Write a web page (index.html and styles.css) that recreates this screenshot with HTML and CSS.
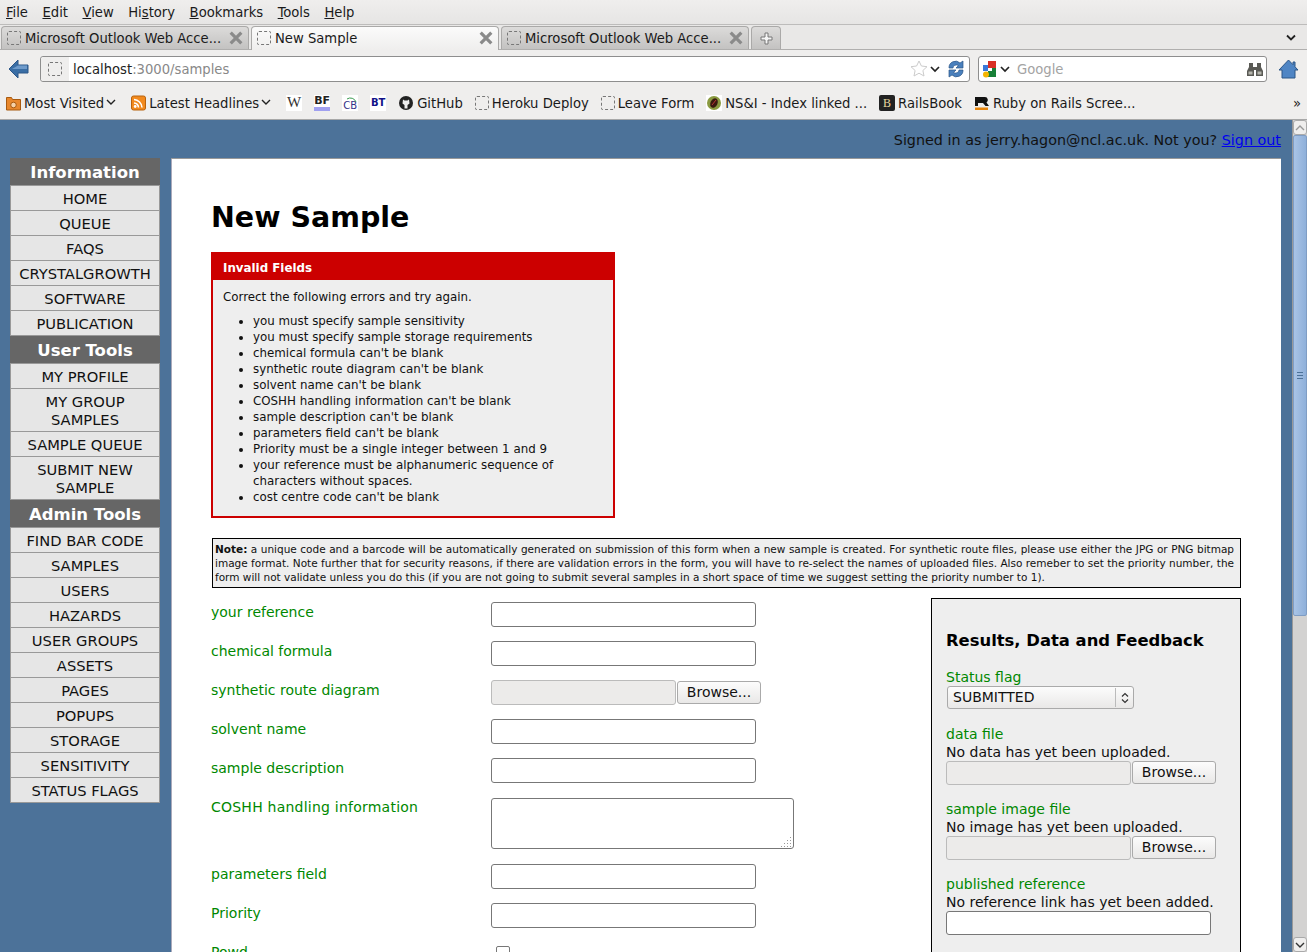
FILE: index.html
```html
<!DOCTYPE html>
<html lang="en">
<head>
    <meta charset="UTF-8">
    <meta name="viewport" content="width=device-width, initial-scale=1.0">
    <title>New Sample</title>
    <link rel="stylesheet" href="styles.css">
</head>
<body>
    <div class="chrome">
        <div class="menubar">
            <span><u>F</u>ile</span><span><u>E</u>dit</span><span><u>V</u>iew</span><span>Hi<u>s</u>tory</span><span><u>B</u>ookmarks</span><span><u>T</u>ools</span><span><u>H</u>elp</span>
        </div>
        <div class="tabbar">
            <div class="tab"><i class="fav"></i><span class="tab-title">Microsoft Outlook Web Acce...</span><svg class="tab-x" viewBox="0 0 12 12"><path d="M2 2l8 8M10 2l-8 8"/></svg></div>
            <div class="tab tab-on"><i class="fav"></i><span class="tab-title">New Sample</span><svg class="tab-x" viewBox="0 0 12 12"><path d="M2 2l8 8M10 2l-8 8"/></svg></div>
            <div class="tab"><i class="fav"></i><span class="tab-title">Microsoft Outlook Web Acce...</span><svg class="tab-x" viewBox="0 0 12 12"><path d="M2 2l8 8M10 2l-8 8"/></svg></div>
            <div class="tab tab-new"><svg width="13" height="13" viewBox="0 0 13 13"><path d="M5 1h3v4h4v3H8v4H5V8H1V5h4z" fill="#f4f4f4" stroke="#777"/></svg></div>
            <svg class="tab-list" width="12" height="8" viewBox="0 0 12 8"><path d="M2 1.500l4 4 4-4" fill="none" stroke="#222" stroke-width="1.800"/></svg>
        </div>
        <div class="navbar">
            <svg class="back" width="22" height="20" viewBox="0 0 22 20"><path d="M1 10l9-9v5h10v8H10v5z" fill="#3a6ea5" stroke="#2c5688"/><path d="M10 6.500h9V10H4z" fill="#6f9bcb"/></svg>
            <div class="urlbar">
                <span class="url-fav"><i class="fav"></i></span>
                <span class="url-text">localhost<em>:3000/samples</em></span>
                <svg width="18" height="18" viewBox="0 0 18 18"><path d="M9 1l2.400 5 5.600.7-4.100 3.800 1.100 5.500-5-2.800-5 2.800 1.100-5.500L1 6.700 6.600 6z" fill="#fff" stroke="#ccc"/></svg>
                <svg class="drop" width="10" height="7" viewBox="0 0 10 7"><path d="M1 1l4 4 4-4" fill="none" stroke="#222" stroke-width="1.700"/></svg>
                <svg class="reload" width="16" height="18" viewBox="0 0 16 18"><path d="M1 8a6.500 6.500 0 0 1 11-5l3-2v7H8l2.500-2.500a3.500 3 0 0 0-5.500 2.500zM15 10a6.500 6.500 0 0 1-11 5l-3 2v-7h7l-2.500 2.500a3.500 3 0 0 0 5.500-2.500z" fill="#4a80bd" stroke="#2c5688" stroke-width=".7"/></svg>
            </div>
            <div class="searchbar">
                <svg width="16" height="17" viewBox="0 0 16 17"><rect x="1" y="4" width="5" height="6" fill="#3b78d8"/><rect x="6" y="0" width="8" height="7" fill="#d93025"/><rect x="6" y="7" width="8" height="9" fill="#188038"/><path d="M6 7h4v3H6z" fill="#fff"/><circle cx="4" cy="13.500" r="3" fill="#f4b400"/></svg>
                <svg class="drop" width="10" height="7" viewBox="0 0 10 7"><path d="M1 1l4 4 4-4" fill="none" stroke="#222" stroke-width="1.700"/></svg>
                <span class="search-text">Google</span>
                <svg width="16" height="15" viewBox="0 0 16 15"><path d="M2 1h4v4h4V1h4v4l2 4v5H9V8H7v6H0V9l2-4z" fill="#5a5a55"/><path d="M1.500 9.500h4v3h-4zM10.500 9.500h4v3h-4z" fill="#b5b5ad"/></svg>
            </div>
            <svg class="home" width="21" height="20" viewBox="0 0 21 20"><path d="M10.500 1L1 11h3v8h13v-8h3l-3-3.200V3h-2v2.700z" fill="#4f85c4" stroke="#2c5688"/></svg>
        </div>
        <div class="bookmarks">
            <span class="bm"><svg width="15" height="16" viewBox="0 0 15 16"><path d="M.5 15V2.500h5l1 2h8V15z" fill="#e8872c" stroke="#a85a10"/><circle cx="7.500" cy="10" r="2.800" fill="#f6d2a8" stroke="#a85a10"/></svg>Most Visited<svg class="drop" width="10" height="7" viewBox="0 0 10 7"><path d="M1 1l4 4 4-4" fill="none" stroke="#222" stroke-width="1.400"/></svg></span>
            <span class="bm"><svg width="15" height="16" viewBox="0 0 15 16"><rect x=".5" y="1" width="14" height="14" rx="2" fill="#f28a1e" stroke="#b8620d"/><path d="M3 4.500a8.500 8.500 0 0 1 8 8M3 8a5 5 0 0 1 4.500 4.500" fill="none" stroke="#fff" stroke-width="1.600"/><circle cx="4.200" cy="11.500" r="1.400" fill="#fff"/></svg>Latest Headlines<svg class="drop" width="10" height="7" viewBox="0 0 10 7"><path d="M1 1l4 4 4-4" fill="none" stroke="#222" stroke-width="1.400"/></svg></span>
            <span class="bm bm-box bm-w">W</span>
            <span class="bm bm-box bm-bf">BF</span>
            <span class="bm bm-box bm-cb">CB<svg width="16" height="16" viewBox="0 0 16 16"><path d="M5 4a6 6 0 0 1 9 3" fill="none" stroke="#3a9a50" stroke-width="1"/></svg></span>
            <span class="bm bm-box bm-bt">BT</span>
            <span class="bm"><svg width="16" height="16" viewBox="0 0 16 16"><circle cx="8" cy="8" r="7" fill="#222"/><path d="M5 4.500l1.500 1h3l1.500-1 .5 4-2 1.500v3.500H6.500V10l-2-1.500z" fill="#eee"/></svg>GitHub</span>
            <span class="bm"><i class="fav"></i>Heroku Deploy</span>
            <span class="bm"><i class="fav"></i>Leave Form</span>
            <span class="bm"><svg width="16" height="16" viewBox="0 0 16 16"><rect width="16" height="16" fill="#fff"/><circle cx="8" cy="8" r="7" fill="#8a9a40"/><ellipse cx="8" cy="8" rx="3.500" ry="5" transform="rotate(25 8 8)" fill="#3a1a10"/><path d="M6 10l4-5" stroke="#b33" stroke-width="1"/></svg>NS&amp;I - Index linked ...</span>
            <span class="bm"><span class="bm-rb">B</span>RailsBook</span>
            <span class="bm"><svg width="16" height="16" viewBox="0 0 16 16"><path d="M1 2h10a3 3 0 0 1 1.500 5.500L15 11h-3.500L9 8H4v3H1z" fill="#111"/><rect x="1" y="12.500" width="13" height="2.500" fill="#e8860c"/></svg>Ruby on Rails Scree...</span>
            <span class="bm-more">»</span>
        </div>
    </div>

    <div class="viewport">
        <div class="page">
            <p class="signed">Signed in as jerry.hagon@ncl.ac.uk. Not you? <a href="#">Sign out</a></p>
            <div class="columns">
                <nav class="side">
                    <h2>Information</h2>
                    <a>HOME</a><a>QUEUE</a><a>FAQS</a><a>CRYSTALGROWTH</a><a>SOFTWARE</a><a>PUBLICATION</a>
                    <h2>User Tools</h2>
                    <a>MY PROFILE</a><a>MY GROUP SAMPLES</a><a>SAMPLE QUEUE</a><a>SUBMIT NEW SAMPLE</a>
                    <h2>Admin Tools</h2>
                    <a>FIND BAR CODE</a><a>SAMPLES</a><a>USERS</a><a>HAZARDS</a><a>USER GROUPS</a><a>ASSETS</a><a>PAGES</a><a>POPUPS</a><a>STORAGE</a><a>SENSITIVITY</a><a>STATUS FLAGS</a>
                </nav>
                <main class="content">
                    <h1>New Sample</h1>
                    <div class="errors">
                        <h3>Invalid Fields</h3>
                        <p>Correct the following errors and try again.</p>
                        <ul>
                            <li>you must specify sample sensitivity</li>
                            <li>you must specify sample storage requirements</li>
                            <li>chemical formula can't be blank</li>
                            <li>synthetic route diagram can't be blank</li>
                            <li>solvent name can't be blank</li>
                            <li>COSHH handling information can't be blank</li>
                            <li>sample description can't be blank</li>
                            <li>parameters field can't be blank</li>
                            <li>Priority must be a single integer between 1 and 9</li>
                            <li>your reference must be alphanumeric sequence of characters without spaces.</li>
                            <li>cost centre code can't be blank</li>
                        </ul>
                    </div>
                    <div class="note"><b>Note:</b> a unique code and a barcode will be automatically generated on submission of this form when a new sample is created. For synthetic route files, please use either the JPG or PNG bitmap image format. Note further that for security reasons, if there are validation errors in the form, you will have to re-select the names of uploaded files. Also remeber to set the priority number, the form will not validate unless you do this (if you are not going to submit several samples in a short space of time we suggest setting the priority number to 1).</div>
                    <div class="form-wrap">
                        <div class="fields">
                            <div class="row"><label>your reference</label><span class="box"></span></div>
                            <div class="row"><label>chemical formula</label><span class="box"></span></div>
                            <div class="row"><label>synthetic route diagram</label><span class="box box-file"></span><span class="browse">Browse...</span></div>
                            <div class="row"><label>solvent name</label><span class="box"></span></div>
                            <div class="row"><label>sample description</label><span class="box"></span></div>
                            <div class="row row-area"><label class="label-caps">COSHH handling information</label><span class="box box-area"><svg class="grip" width="11" height="11" viewBox="0 0 11 11"><path d="M9 1h1v1H9zM6 4h1v1H6zM9 4h1v1H9zM3 7h1v1H3zM6 7h1v1H6zM9 7h1v1H9zM0 10h1v1H0zM3 10h1v1H3zM6 10h1v1H6zM9 10h1v1H9z" fill="#999"/></svg></span></div>
                            <div class="row"><label>parameters field</label><span class="box"></span></div>
                            <div class="row"><label>Priority</label><span class="box"></span></div>
                            <div class="row"><label>Powd</label><span class="check"></span></div>
                        </div>
                        <aside class="panel">
                            <h3>Results, Data and Feedback</h3>
                            <div class="group group-select">
                                <label>Status flag</label>
                                <div class="select"><span>SUBMITTED</span><svg width="8" height="12" viewBox="0 0 8 12"><path d="M1 4.500l3-3 3 3M1 7.500l3 3 3-3" fill="none" stroke="#333" stroke-width="1.200"/></svg></div>
                            </div>
                            <div class="group">
                                <label>data file</label>
                                <p>No data has yet been uploaded.</p>
                                <div class="file-line"><span class="box box-file"></span><span class="browse">Browse...</span></div>
                            </div>
                            <div class="group">
                                <label>sample image file</label>
                                <p>No image has yet been uploaded.</p>
                                <div class="file-line"><span class="box box-file"></span><span class="browse">Browse...</span></div>
                            </div>
                            <div class="group">
                                <label>published reference</label>
                                <p>No reference link has yet been added.</p>
                                <span class="box"></span>
                            </div>
                        </aside>
                    </div>
                </main>
            </div>
        </div>
        <div class="scrollbar">
            <span class="sb-btn"><svg width="10" height="6" viewBox="0 0 10 6"><path d="M1 5l4-4 4 4" fill="none" stroke="#999" stroke-width="1.400"/></svg></span>
            <span class="sb-thumb"><i></i><i></i><i></i></span>
            <span class="sb-track"></span>
            <span class="sb-btn"><svg width="10" height="6" viewBox="0 0 10 6"><path d="M1 1l4 4 4-4" fill="none" stroke="#333" stroke-width="1.400"/></svg></span>
        </div>
    </div>
</body>
</html>
```

FILE: styles.css
```css
html, body { margin: 0; height: 100%; overflow: hidden; }
body { font-family: "DejaVu Sans", sans-serif; font-size: 14px; display: flex; flex-direction: column; height: 952px; }

/* browser chrome */
.chrome { height: 120px; flex: none; font-stretch: condensed; font-size: 14.65px; color: #1a1a1a; background: #edeceb; border-bottom: 1px solid #a8a8a8; box-sizing: border-box; }
.menubar { height: 25px; display: flex; gap: 14.5px; align-items: center; padding: 0 0 2px 6px; background: linear-gradient(#efeeed, #e6e5e4); border-bottom: 1px solid #bdbcbb; box-sizing: border-box; }
.tabbar { height: 25px; display: flex; align-items: flex-end; padding-left: 1px; border-bottom: 1px solid #b0afae; box-sizing: border-box; background: #e9e8e7; position: relative; }
.tab { width: 248px; height: 23px; margin-right: 2px; display: flex; align-items: center; padding: 0 4px 0 5px; box-sizing: border-box; background: linear-gradient(#dcdbda, #c3c2c1); border: 1px solid #aaa9a8; border-bottom: none; border-radius: 4px 4px 0 0; }
.tab-on { background: linear-gradient(#fbfbfb, #efeeed); height: 24px; margin-bottom: -1px; padding-bottom: 1px; }
.tab-new { width: 30px; justify-content: center; padding: 0; }
.tab-title { flex: 1; margin-left: 4px; padding-bottom: 2px; white-space: nowrap; }
.tab-x { width: 16px; height: 16px; fill: none; stroke: #8a8a8a; stroke-width: 2.400; }
.tab-list { position: absolute; right: 10px; top: 9px; }
.fav { display: inline-block; width: 12px; height: 12px; border: 1px dashed #777; border-radius: 2px; flex: none; }
.navbar { height: 38px; display: flex; align-items: center; padding-left: 8px; box-sizing: border-box; background: #efeeed; }
.back { margin-right: 10px; }
.urlbar, .searchbar { height: 26px; background: #fff; border: 1px solid #8e8e8e; border-radius: 3px; box-sizing: border-box; display: flex; align-items: center; flex: none; }
.urlbar { width: 930px; padding-right: 5px; }
.url-fav { width: 28px; height: 24px; margin-right: 4px; background: #efeeed; display: flex; align-items: center; justify-content: center; flex: none; border-radius: 3px 0 0 3px; }
.url-text { flex: 1; padding-bottom: 2px; color: #222; }
.url-text em { font-style: normal; color: #888; }
.drop { margin: 0 2px; flex: none; }
.reload { margin-left: 6px; }
.searchbar { width: 289px; margin-left: 8px; padding: 0 3px 0 3px; }
.search-text { flex: 1; margin-left: 5px; padding-bottom: 2px; color: #a3a3a3; }
.home { margin-left: 11px; }
.bookmarks { height: 31px; display: flex; align-items: center; padding: 0 0 2px 6px; gap: 12px; position: relative; box-sizing: border-box; background: #efeeed; }
.bm { display: inline-flex; align-items: center; gap: 3px; white-space: nowrap; }
.bm .drop { margin: 0 3px 0 -1px; }
.bm-box { width: 16px; height: 16px; justify-content: center; background: #fff; font-weight: bold; font-size: 11px; font-stretch: normal; overflow: hidden; position: relative; }
.bm-w { font-family: "Liberation Serif", serif; font-size: 15px; font-weight: normal; color: #333; }
.bm-bf { color: #222; border-bottom: 4px solid #a0a0f0; box-sizing: border-box; line-height: 12px; }
.bm-cb { color: #338; font-weight: normal; font-size: 10px; align-items: flex-end; }
.bm-cb svg { position: absolute; left: 0; top: 0; }
.bm-bt { color: #118; font-size: 10px; }
.bm-rb { width: 16px; height: 16px; background: #222; color: #e8d8a0; border-radius: 2px; font-size: 12px; text-align: center; line-height: 16px; font-family: "Liberation Serif", serif; }
.bm-more { position: absolute; right: 6px; top: 6px; }

/* scrolled page */
.viewport { flex: 1; display: flex; min-height: 0; overflow: hidden; }
.page { flex: 1; min-width: 0; background: #4c7299; overflow: hidden; padding: 0 11px 0 10px; box-sizing: border-box; }
.signed { margin: 0; height: 38px; padding-top: 12px; box-sizing: border-box; text-align: right; color: #111; font-size: 14.33px; line-height: 17px; }
.columns { display: flex; gap: 11px; align-items: flex-start; }

.side { width: 150px; flex: none; background: #e6e6e6; box-sizing: border-box; }
.side h2 { margin: 0; height: 28px; border-bottom: 1px solid #999; box-sizing: border-box; background: #666; color: #fff; font-size: 16.5px; line-height: 29px; text-align: center; font-weight: bold; }
.side a { display: block; padding: 4px 6px 2px; border: 1px solid #999; border-top: none; font-size: 14.7px; line-height: 18px; text-align: center; color: #111; }

.content { flex: 1; background: #fff; padding: 41px 40px 0 41px; border-top: 1px solid #999; box-shadow: inset 1px 0 0 #aab; height: 900px; box-sizing: border-box; }
h1 { margin: 0 0 17px -1px; font-size: 28.5px; line-height: 35px; color: #000; }

.errors { width: 404px; margin-left: -1px; background: #eee; border: 2px solid #c00; box-sizing: border-box; font-size: 11.85px; color: #111; padding-bottom: 11px; }
.errors h3 { margin: 0; background: #c00; color: #fff; font-size: 11.85px; height: 26px; line-height: 28px; padding-left: 10px; }
.errors p { margin: 9px 0 8px 10px; line-height: 16px; }
.errors ul { margin: 0; padding: 0 40px 0 40px; }
.errors li { line-height: 16px; }

.note { margin-top: 20px; border: 1px solid #000; background: #eee; padding: 3px 6px 3px 2px; font-size: 10.5px; line-height: 14px; color: #111; text-align: justify; }

.form-wrap { display: flex; justify-content: space-between; margin-top: 10px; align-items: flex-start; }
.fields { flex: 1; }
.row { height: 39px; display: flex; align-items: flex-start; padding-top: 4px; box-sizing: border-box; }
.row label { width: 280px; margin-left: -1px; padding-top: 1px; }
.row-area { height: 67px; }
label { color: #080; font-size: 14px; line-height: 18px; display: block; }
.label-caps { letter-spacing: .23px; }

.box { display: block; width: 265px; height: 25px; box-sizing: border-box; background: #fff; border: 1px solid #777; border-radius: 3px; position: relative; }
.box-file { width: 185px; background: #ecebea; border-color: #bbb; }
.box-area { width: 303px; height: 51px; margin-top: 1px; }
.grip { position: absolute; right: 1px; bottom: 1px; }
.browse { width: 84px; height: 23px; margin-left: 1px; margin-top: 1px; display: block; box-sizing: border-box; border: 1px solid #aaa; border-radius: 3px; background: linear-gradient(#fcfcfc, #e9e8e7); text-align: center; font-size: 14px; line-height: 20px; color: #111; }
.check { width: 12px; height: 12px; border: 1px solid #777; border-radius: 2px; background: #fff; margin-left: 5px; margin-top: 4px; }

.panel { width: 310px; height: 600px; flex: none; box-sizing: border-box; border: 1px solid #000; background: #eee; padding: 32px 14px 0; color: #111; }
.panel h3 { margin: 0 0 18px; font-size: 16.4px; line-height: 19px; color: #000; }
.panel p { margin: 0; line-height: 18px; white-space: nowrap; }
.panel .box { height: 24px; }
.group { margin-bottom: 15px; }
.group-select { margin-bottom: 16px; }
.select { width: 187px; height: 23px; margin-left: 1px; box-sizing: border-box; border: 1px solid #aaa; border-radius: 3px; background: linear-gradient(#fcfcfc, #e9e8e7); display: flex; align-items: center; padding: 0 4px 0 5px; }
.select span { flex: 1; border-right: 1px solid #bbb; line-height: 19px; }
.select svg { margin-left: 5px; }
.file-line { display: flex; align-items: flex-start; }
.file-line .browse { margin-top: 0; }

.scrollbar { width: 15px; flex: none; display: flex; flex-direction: column; background: #d3d2d1; border-left: 1px solid #999; box-sizing: border-box; }
.sb-btn { height: 15px; flex: none; background: #efeeed; border: 1px solid #aaa; border-radius: 3px; box-sizing: border-box; display: flex; align-items: center; justify-content: center; }
.sb-thumb { height: 481px; flex: none; background: linear-gradient(90deg, #a9c4e6, #8fb0da); border: 1px solid #7f9dc4; border-radius: 2px; box-sizing: border-box; display: flex; flex-direction: column; gap: 2px; align-items: center; justify-content: center; }
.sb-thumb i { width: 6px; height: 1px; background: #4c7299; }
.sb-track { flex: 1; }
```
